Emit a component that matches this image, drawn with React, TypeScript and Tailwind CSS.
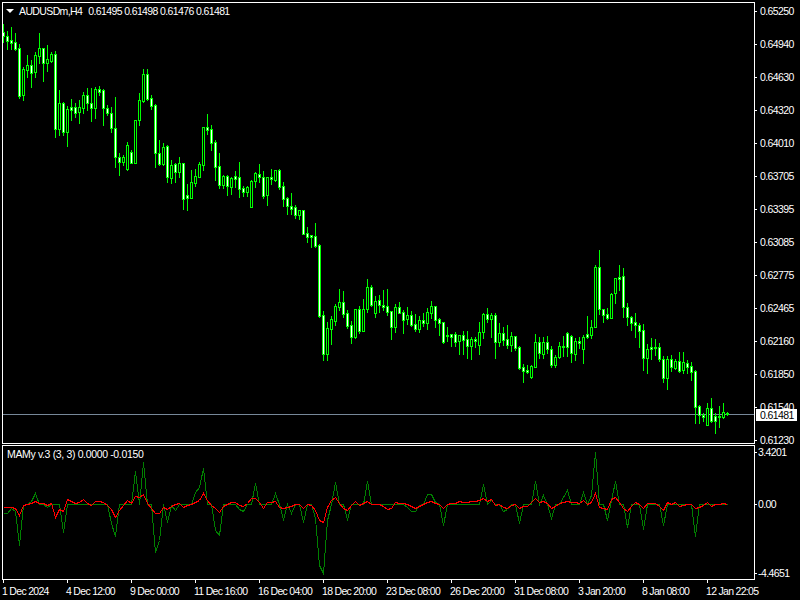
// AUDUSDm H4 chart window with the MAMy indicator pane underneath
const font = "font-['Liberation_Sans',sans-serif] text-[10.5px] leading-[12px] text-white";

// [wick top, wick bottom, body top, body bottom, 1 = white body], pixel rows, one candle each 4px from x=3
const candles: number[][] = [
  [24,42,32,36,1],[31,49,36,41,1],[27,49,40,43,1],[33,50,42,49,1],[44,98,48,96,1],[67,100,69,95,0],[55,77,65,70,0],[60,87,65,73,1],
  [52,77,55,72,0],[33,63,48,56,0],[48,81,48,63,1],[45,71,59,63,0],[52,62,54,61,0],[51,137,54,129,1],[90,135,103,129,0],[102,135,103,132,1],
  [106,146,109,132,0],[99,120,107,110,1],[103,117,107,113,1],[100,123,107,112,0],[92,113,95,108,0],[88,110,95,103,1],[88,121,103,108,1],[87,118,89,108,0],
  [86,95,89,92,1],[89,125,90,108,1],[105,115,108,113,1],[107,132,113,128,1],[97,167,128,157,1],[153,175,157,162,1],[155,165,157,162,0],[142,170,145,169,0],
  [150,163,152,163,1],[120,163,120,163,0],[93,125,100,120,0],[69,102,74,101,0],[69,100,74,99,1],[95,109,98,106,1],[104,167,105,153,1],[140,165,153,164,1],
  [143,165,147,164,0],[145,182,146,177,1],[160,183,165,178,0],[163,182,164,172,1],[157,177,163,172,0],[163,209,163,199,1],[184,210,195,198,1],[170,198,182,198,0],
  [169,186,176,183,0],[162,177,164,177,0],[127,170,127,165,0],[114,134,127,130,1],[125,150,129,143,1],[140,180,142,167,1],[153,188,166,185,1],[175,188,176,185,0],
  [175,195,176,186,1],[177,194,178,187,0],[171,187,176,179,1],[162,197,177,189,1],[186,196,188,192,1],[186,196,187,192,0],[180,207,181,207,0],[172,187,173,181,0],
  [164,182,174,177,1],[171,198,177,196,1],[177,205,177,195,0],[169,184,177,179,1],[170,181,170,180,0],[169,189,170,187,1],[182,206,186,199,1],[197,214,198,206,1],
  [193,214,206,209,1],[205,218,207,215,1],[210,219,210,215,0],[210,234,210,234,1],[227,242,233,237,1],[235,247,235,237,1],[223,247,236,246,1],[244,317,245,316,1],
  [311,360,315,354,1],[322,360,328,354,0],[316,344,319,329,0],[304,325,306,321,0],[289,310,302,307,0],[291,317,302,314,1],[310,328,313,326,1],[321,343,325,337,1],
  [309,338,309,337,0],[306,333,309,331,1],[299,331,309,331,0],[279,312,287,309,0],[285,306,287,305,1],[296,317,301,313,0],[295,312,300,305,1],[290,310,305,307,1],
  [289,315,306,312,1],[311,339,311,327,1],[304,332,307,327,0],[302,313,307,313,1],[310,333,312,320,1],[307,324,315,319,0],[311,326,315,325,1],[314,331,324,329,1],
  [316,332,320,329,0],[313,326,320,323,1],[308,329,312,323,0],[301,318,306,313,0],[306,327,306,320,1],[318,335,319,323,1],[322,343,322,342,1],[327,341,335,336,1],
  [334,346,334,337,1],[332,346,334,342,1],[335,354,335,341,0],[331,354,335,340,1],[331,358,339,346,1],[337,359,339,346,0],[337,347,339,341,1],[322,354,332,345,0],
  [313,338,314,332,0],[308,322,314,319,1],[313,337,315,319,0],[313,358,315,342,1],[323,346,333,342,0],[327,345,333,340,1],[325,348,339,345,1],[332,351,336,345,0],
  [336,350,336,348,1],[346,369,347,368,1],[364,382,367,371,1],[365,373,370,372,1],[365,378,366,377,0],[334,367,342,367,0],[337,358,342,353,1],[337,358,342,354,0],
  [336,353,342,349,1],[346,367,349,365,1],[355,367,357,365,0],[342,358,346,357,0],[336,356,346,347,1],[332,356,333,347,1],[335,362,336,353,1],[338,360,341,354,0],
  [337,348,341,343,1],[335,363,337,349,0],[316,338,334,337,1],[320,338,327,335,0],[265,327,267,327,0],[250,314,267,309,1],[309,322,309,315,1],[308,319,314,318,1],
  [293,318,294,318,0],[278,303,278,293,0],[265,290,277,279,1],[268,317,276,307,1],[303,325,307,317,1],[316,330,317,323,1],[313,337,322,325,1],[323,347,325,331,1],
  [324,370,330,358,1],[344,373,349,358,0],[338,359,347,349,1],[339,355,347,348,1],[343,361,347,359,1],[356,382,359,378,1],[356,389,359,378,0],[355,371,359,367,1],
  [359,369,361,368,0],[352,372,361,371,1],[352,373,362,370,0],[360,373,363,367,1],[362,380,366,372,1],[370,423,371,407,1],[405,423,406,415,1],[413,421,415,417,1],
  [403,425,408,425,0],[398,422,408,421,1],[413,433,416,421,1],[406,427,416,417,1],[403,418,412,417,0],[412,415,413,414,1],
];

const green = [
  513,513,508,511,545,505,504,501,493,504,504,507,504,504,504,532,504,504,504,504,504,504,504,504,504,504,504,523,536,504,
  504,504,504,471,504,462,504,504,552,540,504,522,505,510,504,504,504,504,492,487,468,504,504,530,535,504,504,504,504,509,
  511,504,504,483,504,504,504,504,493,504,519,504,513,504,504,522,504,504,518,565,573,520,504,482,504,504,519,504,504,504,
  504,481,504,504,504,504,504,504,504,504,504,507,511,511,505,504,494,494,502,504,525,504,504,504,504,504,504,504,504,504,
  484,504,500,504,504,511,509,504,504,523,504,504,504,481,504,495,504,518,504,504,497,490,504,504,504,492,504,495,452,504,
  504,520,500,481,504,504,527,504,504,504,529,504,504,504,504,525,504,504,504,504,504,504,504,536,504,504,504,504,504,504,
  504,504,
];

const red = [
  507,507,507,508,515,505,504,503,501,503,503,505,503,517,509,511,499,501,503,502,499,503,505,501,501,502,505,509,517,510,
  505,500,503,496,497,494,503,508,513,513,507,509,506,504,503,507,505,504,502,500,493,500,505,508,512,506,504,502,502,505,
  506,503,498,498,502,508,502,502,501,507,508,507,506,504,504,508,504,505,510,520,522,507,500,497,503,508,510,505,501,505,
  503,501,504,504,504,506,509,508,502,503,503,504,506,508,506,504,502,501,503,504,508,504,503,503,501,502,502,501,501,500,
  498,501,499,505,504,507,508,505,504,508,506,506,502,498,502,501,503,508,506,503,502,501,502,502,503,500,504,502,493,507,
  508,509,499,497,502,508,511,506,502,504,508,503,503,503,506,510,502,504,502,506,505,504,504,508,507,505,502,506,504,504,
  503,504,
];

const priceLabels = ["0.65250","0.64940","0.64630","0.64320","0.64010","0.63705","0.63395","0.63085","0.62775","0.62465","0.62160","0.61850","0.61540","0.61230"];
const timeLabels = ["1 Dec 2024","4 Dec 12:00","9 Dec 00:00","11 Dec 16:00","16 Dec 04:00","18 Dec 20:00","23 Dec 08:00","26 Dec 20:00","31 Dec 08:00","3 Jan 20:00","8 Jan 08:00","12 Jan 22:05"];

const toPoints = (ys: number[]) => ys.map((y, i) => `${3 + i * 4 + 0.5},${y + 0.5}`).join(" ");

const Tick = () => <div className="w-[2px] h-px bg-white shrink-0" />;

export default function App() {
  return (
    <div className="w-[800px] h-[600px] bg-black overflow-hidden pt-[2px] pl-[2px] flex flex-col">
      {/* price pane */}
      <div className="flex h-[442px] shrink-0">
        <div className="relative w-[753px] h-full border border-white shrink-0">
          <svg className="absolute inset-0 block" width={751} height={440} viewBox="3 3 751 440" shapeRendering="crispEdges">
            <rect x={3} y={414} width={751} height={1} fill="#778899" />
            {candles.map(([wt, wb, bt, bb, w], i) => {
              const x = 3 + i * 4;
              return (
                <g key={i}>
                  <rect x={x} y={wt} width={1} height={wb - wt + 1} fill="#00ff00" />
                  <rect x={x - 1} y={bt} width={3} height={bb - bt + 1} fill="#00ff00" />
                  {bb - bt > 1 && <rect x={x} y={bt + 1} width={1} height={bb - bt - 1} fill={w ? "#ffffff" : "#000000"} />}
                </g>
              );
            })}
          </svg>
          <div className={`absolute left-[3px] top-[1px] flex items-center h-[14px] tracking-[-0.62px] ${font}`}>
            <svg width={8} height={4} viewBox="0 0 8 4" className="mr-[5px] shrink-0">
              <polygon points="0,0 8,0 4,4" fill="#ffffff" />
            </svg>
            <span className="whitespace-nowrap">AUDUSDm,H4</span>
            <span className="whitespace-nowrap ml-[6px]">0.61495 0.61498 0.61476 0.61481</span>
          </div>
        </div>
        <div className="relative flex-1">
          <div className="flex flex-col gap-[21px] pt-[3px]">
            {priceLabels.map((p) => (
              <div key={p} className="flex items-center h-[12px]">
                <Tick />
                <span className={`ml-[3px] tracking-[-0.6px] ${font}`}>{p}</span>
              </div>
            ))}
          </div>
          <div className="absolute left-[1px] top-[407px] w-[41px] h-[12px] bg-white flex items-center pl-[4px]">
            <span className={`tracking-[-0.6px] ${font} !text-black`}>0.61481</span>
          </div>
        </div>
      </div>

      {/* indicator pane */}
      <div className="flex h-[135px] mt-px shrink-0">
        <div className="relative w-[753px] h-full border border-white shrink-0">
          <svg className="absolute inset-0 block" width={751} height={133} viewBox="3 446 751 133" shapeRendering="crispEdges" fill="none">
            <polyline points={toPoints(green)} stroke="#008000" strokeWidth={1} />
            <polyline points={toPoints(red)} stroke="#ff0000" strokeWidth={1} />
          </svg>
          <div className={`absolute left-[4px] top-[2px] whitespace-nowrap tracking-[-0.35px] ${font}`}>MAMy v.3 (3, 3) 0.0000 -0.0150</div>
        </div>
        <div className="flex-1 flex flex-col pt-px">
          <div className="flex items-center h-[12px]">
            <Tick />
            <span className={`ml-px tracking-[-0.6px] ${font}`}>3.4201</span>
          </div>
          <div className="flex items-center h-[12px] mt-[40px]">
            <Tick />
            <span className={`ml-px tracking-[-0.6px] ${font}`}>0.00</span>
          </div>
          <div className="flex items-center h-[12px] mt-[57px]">
            <Tick />
            <span className={`ml-px tracking-[-0.6px] ${font}`}>-4.4651</span>
          </div>
        </div>
      </div>

      {/* time axis */}
      <div className="flex pl-px">
        {timeLabels.map((t) => (
          <div key={t} className="w-[64px] shrink-0 flex flex-col">
            <div className="w-px h-[3px] bg-white" />
            <span className={`whitespace-nowrap -ml-px mt-[2px] tracking-[-0.7px] ${font}`}>{t}</span>
          </div>
        ))}
      </div>
    </div>
  );
}
